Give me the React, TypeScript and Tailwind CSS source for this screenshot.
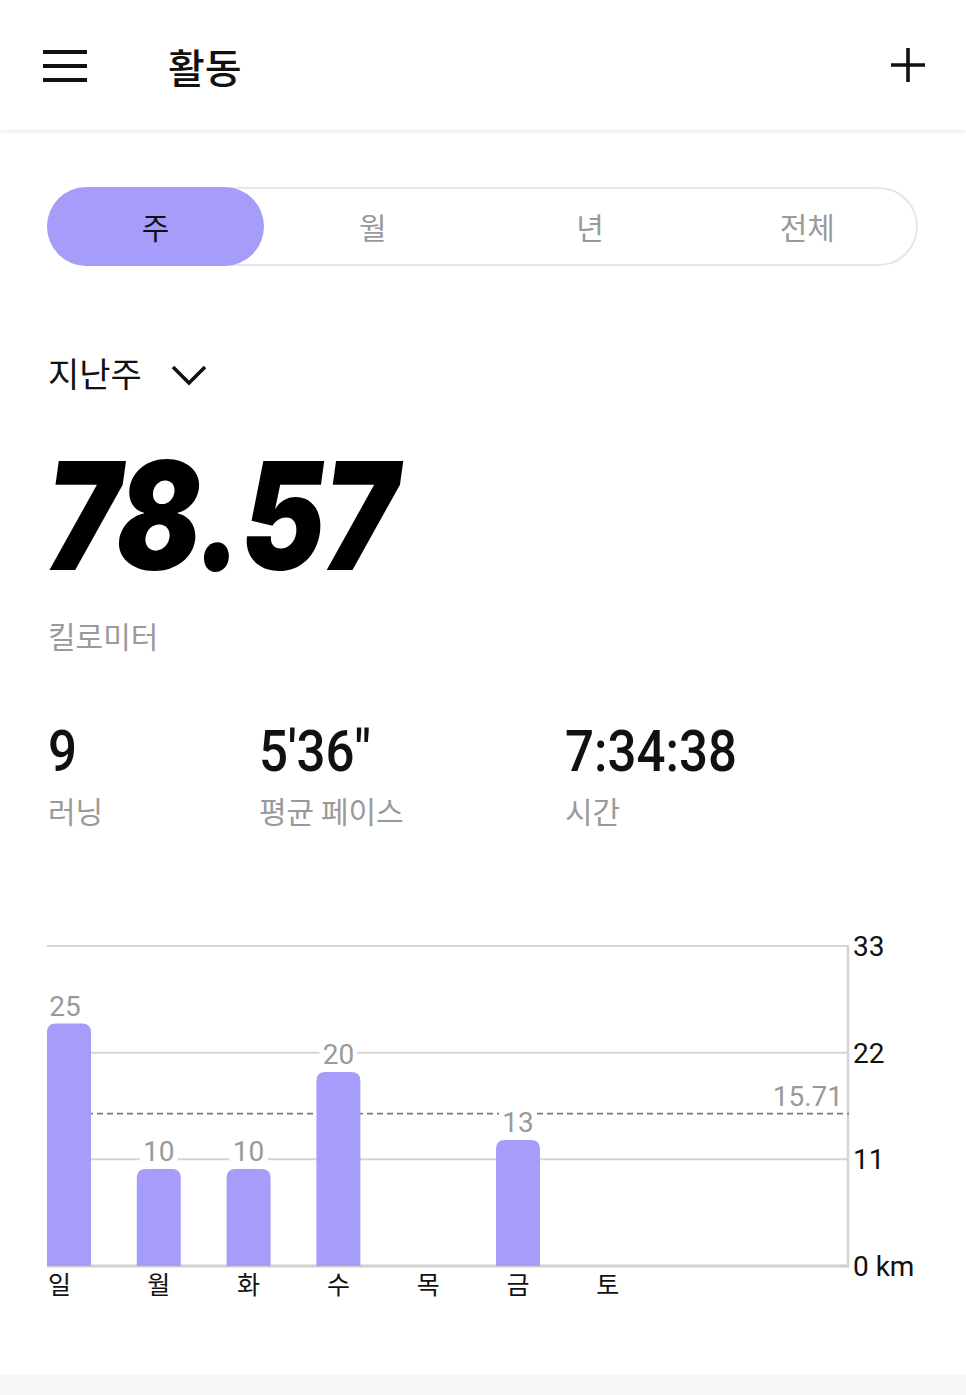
const days = [
  { d: "일", v: 25 },
  { d: "월", v: 10 },
  { d: "화", v: 10 },
  { d: "수", v: 20 },
  { d: "목", v: 0 },
  { d: "금", v: 13 },
  { d: "토", v: 0 },
];

const FONT = "Roboto, 'Noto Sans CJK KR', sans-serif";
const KR = "'Noto Sans CJK KR', Roboto, sans-serif";

// chart geometry (svg coords, svg top = page y 920)
const base = 346; // 1266
const top = 26; // 946
const scale = (base - top) / 33;
const y = (v: number) => base - v * scale;

function Chart() {
  const avg = 15.71;
  return (
    <svg width="966" height="390" viewBox="0 0 966 390" className="block">
      {[33, 22, 11].map((g) => (
        <line key={g} x1="47" x2="849" y1={y(g)} y2={y(g)} stroke="#d4d4d4" strokeWidth="2" />
      ))}
      <line x1="848" x2="848" y1={top} y2={base} stroke="#d4d4d4" strokeWidth="2.5" />
      <line x1="47" x2="849" y1={base} y2={base} stroke="#d0d0d0" strokeWidth="3" />
      <line x1="47" x2="849" y1={y(avg)} y2={y(avg)} stroke="#7a7a7a" strokeWidth="1.8" strokeDasharray="6 4" />
      <rect x="772" y={y(avg) - 34} width="72" height="30" fill="white" />
      <text x="843" y={y(avg) - 8} textAnchor="end" fontSize="28" fill="#9a9a9a" fontFamily={FONT}>
        15.71
      </text>
      {days.map((d, i) => {
        const cx = 69 + i * 89.8;
        const lx = i === 0 ? 65 : cx;
        return (
          <g key={d.d}>
            {d.v > 0 && (
              <>
                <path
                  d={`M${cx - 22} ${base} V${y(d.v) + 9} Q${cx - 22} ${y(d.v)} ${cx - 13} ${y(d.v)} H${cx + 13} Q${cx + 22} ${y(d.v)} ${cx + 22} ${y(d.v) + 9} V${base} Z`}
                  fill="#a69dfa"
                />
                <rect x={lx - 19} y={y(d.v) - 32} width="38" height="28" fill="white" />
                <text x={lx} y={y(d.v) - 8} textAnchor="middle" fontSize="28" fill="#9a9a9a" fontFamily={FONT}>
                  {d.v}
                </text>
              </>
            )}
            <text
              x={i === 0 ? 48 : cx}
              y={base + 28}
              textAnchor={i === 0 ? "start" : "middle"}
              fontSize="25"
              fill="#111"
              fontFamily={KR}
            >
              {d.d}
            </text>
          </g>
        );
      })}
      {[
        [33, "33"],
        [22, "22"],
        [11, "11"],
        [0, "0 km"],
      ].map(([v, t]) => (
        <text key={t as string} x="853" y={y(v as number) + 10} fontSize="28" fill="#111" fontFamily={FONT}>
          {t}
        </text>
      ))}
    </svg>
  );
}

export default function App() {
  return (
    <div className="w-[966px] min-h-[1395px] bg-[#f6f6f6]" style={{ fontFamily: FONT }}>
      <div className="h-[1375px] bg-white">
        {/* header */}
        <div className="relative flex h-[130px] items-center bg-white shadow-[0_2px_4px_rgba(0,0,0,0.08)]">
          <svg width="46" height="34" viewBox="0 0 46 34" className="ml-[42px] mt-[2px]">
            <rect x="1" y="1" width="44" height="4" fill="#111" />
            <rect x="1" y="15" width="44" height="4" fill="#111" />
            <rect x="1" y="29" width="44" height="4" fill="#111" />
          </svg>
          <div className="ml-[80px] mt-[2px] text-[40px] font-medium text-[#111]" style={{ fontFamily: KR }}>
            활동
          </div>
          <svg width="36" height="36" viewBox="0 0 36 36" className="ml-auto mr-[40px] mt-[0px]">
            <path d="M18 1V35M1 18H35" stroke="#111" strokeWidth="3.6" />
          </svg>
        </div>

        {/* segment */}
        <div className="mx-[47px] mt-[57px] flex h-[79px] w-[871px] rounded-full border-2 border-[#e6e6e6]" style={{ fontFamily: KR }}>
          {["주", "월", "년", "전체"].map((t, i) => (
            <div
              key={t}
              className={`flex flex-1 items-center justify-center rounded-full text-[30px] ${
                i === 0 ? "bg-[#a69dfa] text-[#111] -my-[2px] -ml-[2px]" : "text-[#9a9a9a]"
              }`}
            >
              {t}
            </div>
          ))}
        </div>

        {/* period */}
        <div className="ml-[48px] mt-[82px] flex h-[48px] items-center" style={{ fontFamily: KR }}>
          <span className="text-[34px] text-[#111]">지난주</span>
          <svg width="38" height="24" viewBox="0 0 38 24" className="ml-[28px] mt-[6px]">
            <path d="M3 4L19 20L35 4" fill="none" stroke="#111" strokeWidth="3.6" />
          </svg>
        </div>

        <div
          className="ml-[46px] mt-[45px] h-[150px] origin-left scale-x-[0.83] text-[150px] font-black italic leading-none tracking-[-2px] text-black"
          style={{ fontFamily: "Inter, sans-serif" }}
        >
          78.57
        </div>
        <div className="ml-[48px] mt-[24px] h-[40px] text-[30px] leading-[40px] text-[#9a9a9a]" style={{ fontFamily: KR }}>
          킬로미터
        </div>

        {/* stats */}
        <div className="mt-[67px] flex">
          {[
            ["9", "러닝", "w-[211px]"],
            ["5'36\"", "평균 페이스", "w-[306px]"],
            ["7:34:38", "시간", "w-[300px]"],
          ].map(([v, l, w]) => (
            <div key={l} className={`${w} first:ml-[48px]`}>
              <div className="h-[58px] origin-left scale-x-[0.88] text-[58px] font-medium leading-none text-[#111]">{v}</div>
              <div className="mt-[10px] h-[40px] text-[30px] leading-[40px] text-[#9a9a9a]" style={{ fontFamily: KR }}>
                {l}
              </div>
            </div>
          ))}
        </div>

        <div className="mt-[90px]">
          <Chart />
        </div>
      </div>
    </div>
  );
}
